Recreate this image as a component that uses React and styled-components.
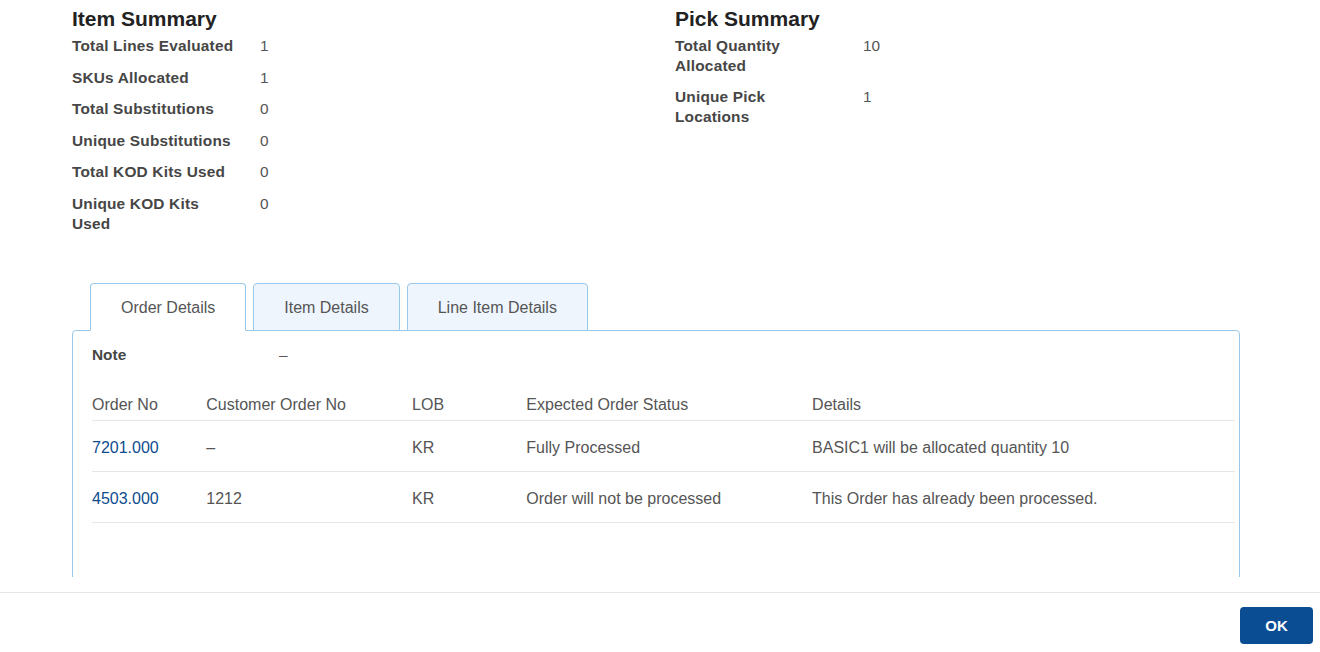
import React from 'react';
import styled, { createGlobalStyle } from 'styled-components';

const GlobalStyle = createGlobalStyle`
  html, body {
    margin: 0;
    padding: 0;
    background: #fff;
  }

  body {
    font-family: "Liberation Sans", Arial, Helvetica, sans-serif;
    color: #555;
  }

  * {
    box-sizing: border-box;
  }
`;

const Modal = styled.div`
  height: 100vh;
  display: flex;
  flex-direction: column;
`;

const Body = styled.div`
  flex: 1;
  min-height: 0;
  overflow: hidden;
  margin-bottom: 15px;
  padding: 6px 80px 0 72px;
`;

const SummaryGrid = styled.div`
  display: grid;
  grid-template-columns: 603px 1fr;
`;

const SectionTitle = styled.h2`
  margin: 0 0 4px;
  font-size: 21px;
  line-height: 26px;
  font-weight: 700;
  color: #222;
`;

const StatRow = styled.div`
  display: flex;
  align-items: flex-start;
  padding-bottom: 12px;
`;

const StatLabel = styled.div`
  width: 164px;
  margin-right: 24px;
  font-size: 15.4px;
  line-height: 19.6px;
  font-weight: 700;
  letter-spacing: 0.2px;
  color: #464646;
`;

const StatValue = styled.div`
  font-size: 15.4px;
  line-height: 19.6px;
  color: #555;
`;

const TabList = styled.div`
  display: flex;
  align-items: flex-end;
  margin-top: 38px;
  padding-left: 18px;
`;

const Tab = styled.button`
  position: relative;
  z-index: 1;
  height: 48px;
  margin: 0 7px -1px 0;
  padding: 2px 30px 0;
  border: 1px solid #99c9ea;
  border-bottom-color: ${(p) => (p.$active ? '#fff' : '#99c9ea')};
  border-radius: 4px 4px 0 0;
  background: ${(p) => (p.$active ? '#fff' : '#eef5fd')};
  font-family: inherit;
  font-size: 16px;
  color: #555;
  cursor: pointer;
`;

const Panel = styled.div`
  min-height: 300px;
  border: 1px solid #99c9ea;
  border-radius: 4px;
  padding: 14px 4px 0 19px;
`;

const NoteRow = styled.div`
  display: flex;
  line-height: 20px;
  font-size: 15.4px;
`;

const NoteLabel = styled.div`
  width: 187px;
  font-weight: 700;
  color: #464646;
`;

const NoteValue = styled.div`
  color: #555;
`;

const Table = styled.table`
  width: 100%;
  margin-top: 30px;
  border-collapse: collapse;
  table-layout: fixed;
  font-size: 16px;
  line-height: 20px;
  color: #555;

  th {
    text-align: left;
    font-weight: 400;
    padding: 0 0 5px;
    border-bottom: 1px solid #e6e6e6;
  }

  td {
    padding: 17px 0 13px;
    border-bottom: 1px solid #e6e6e6;
  }
`;

const OrderLink = styled.a`
  color: #0e4c8f;
  text-decoration: none;
`;

const Footer = styled.div`
  display: flex;
  justify-content: flex-end;
  border-top: 1px solid #e5e5e5;
  padding: 14px 7px 8px;
`;

const OkButton = styled.button`
  width: 73px;
  height: 37px;
  border: none;
  border-radius: 4px;
  background: #0b4d93;
  color: #fff;
  font-family: inherit;
  font-size: 15px;
  font-weight: 700;
  cursor: pointer;
`;

const itemSummary = [
  ['Total Lines Evaluated', '1'],
  ['SKUs Allocated', '1'],
  ['Total Substitutions', '0'],
  ['Unique Substitutions', '0'],
  ['Total KOD Kits Used', '0'],
  ['Unique KOD Kits Used', '0'],
];

const pickSummary = [
  ['Total Quantity Allocated', '10'],
  ['Unique Pick Locations', '1'],
];

const orders = [
  {
    orderNo: '7201.000',
    customerOrderNo: '–',
    lob: 'KR',
    status: 'Fully Processed',
    details: 'BASIC1 will be allocated quantity 10',
  },
  {
    orderNo: '4503.000',
    customerOrderNo: '1212',
    lob: 'KR',
    status: 'Order will not be processed',
    details: 'This Order has already been processed.',
  },
];

const tabs = ['Order Details', 'Item Details', 'Line Item Details'];

function Summary({ title, rows }) {
  return (
    <div>
      <SectionTitle>{title}</SectionTitle>
      {rows.map(([label, value]) => (
        <StatRow key={label}>
          <StatLabel>{label}</StatLabel>
          <StatValue>{value}</StatValue>
        </StatRow>
      ))}
    </div>
  );
}

export default function App() {
  return (
    <Modal>
      <GlobalStyle />
      <Body>
        <SummaryGrid>
          <Summary title='Item Summary' rows={itemSummary} />
          <Summary title='Pick Summary' rows={pickSummary} />
        </SummaryGrid>

        <TabList>
          {tabs.map((tab, index) => (
            <Tab key={tab} $active={index === 0}>
              {tab}
            </Tab>
          ))}
        </TabList>

        <Panel>
          <NoteRow>
            <NoteLabel>Note</NoteLabel>
            <NoteValue>–</NoteValue>
          </NoteRow>

          <Table>
            <colgroup>
              <col style={{ width: '10%' }} />
              <col style={{ width: '18%' }} />
              <col style={{ width: '10%' }} />
              <col style={{ width: '25%' }} />
              <col style={{ width: '37%' }} />
            </colgroup>
            <thead>
              <tr>
                <th>Order No</th>
                <th>Customer Order No</th>
                <th>LOB</th>
                <th>Expected Order Status</th>
                <th>Details</th>
              </tr>
            </thead>
            <tbody>
              {orders.map((order) => (
                <tr key={order.orderNo}>
                  <td>
                    <OrderLink href='#'>{order.orderNo}</OrderLink>
                  </td>
                  <td>{order.customerOrderNo}</td>
                  <td>{order.lob}</td>
                  <td>{order.status}</td>
                  <td>{order.details}</td>
                </tr>
              ))}
            </tbody>
          </Table>
        </Panel>
      </Body>

      <Footer>
        <OkButton>OK</OkButton>
      </Footer>
    </Modal>
  );
}
